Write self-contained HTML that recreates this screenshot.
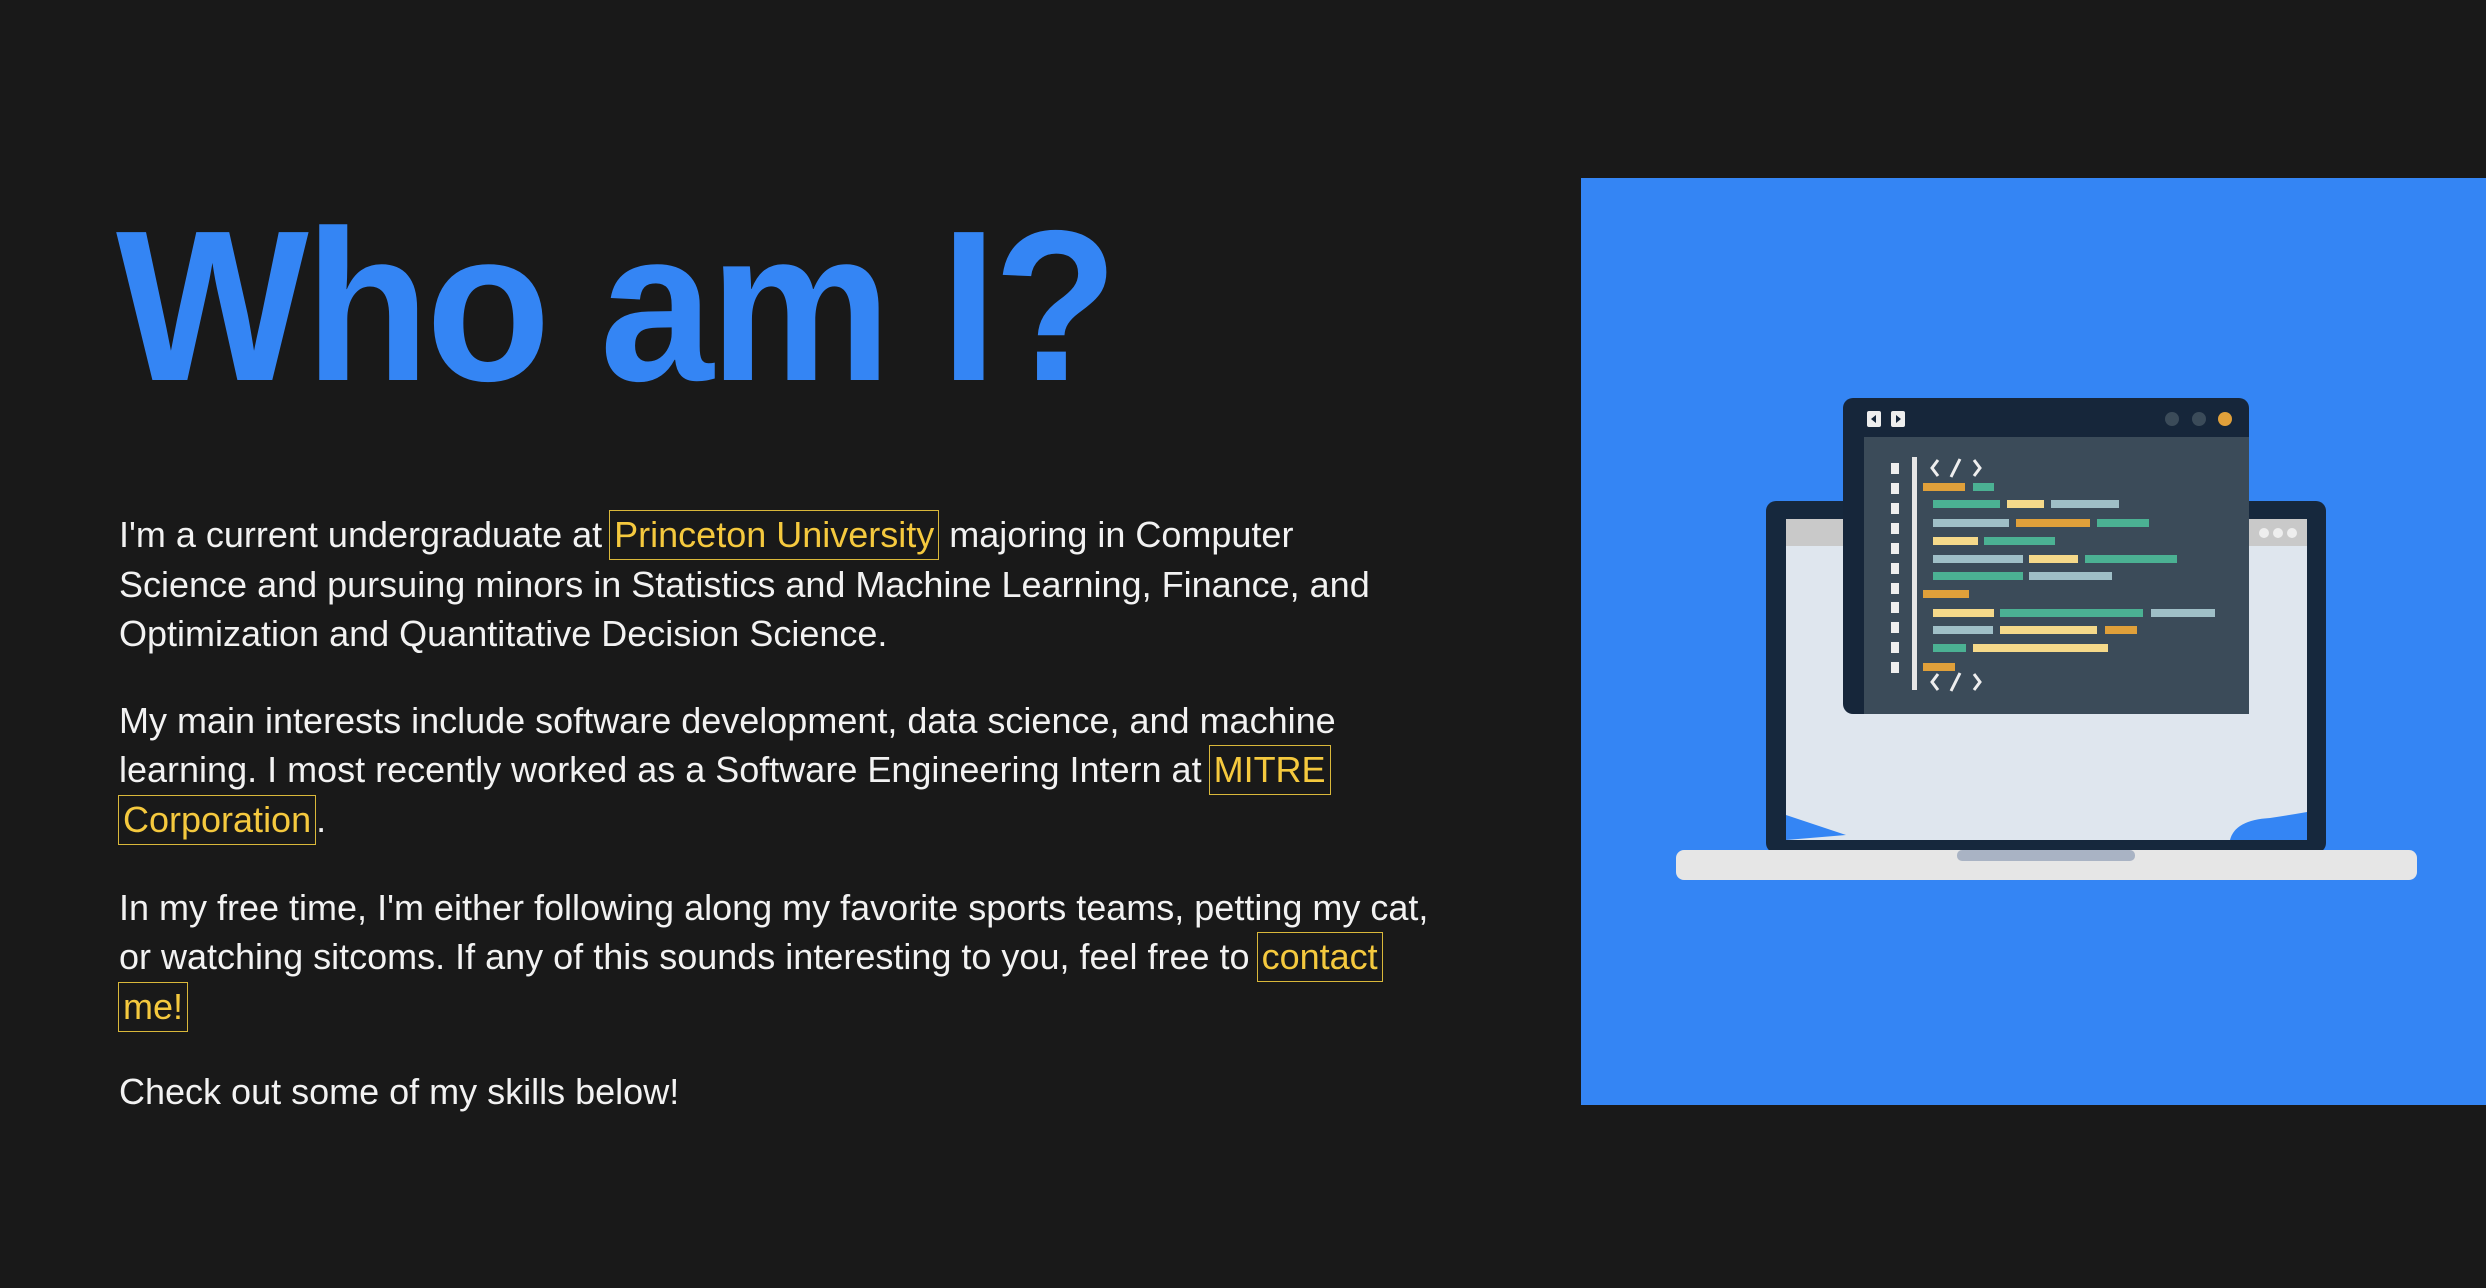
<!DOCTYPE html>
<html><head><meta charset="utf-8"><style>
html,body{margin:0;padding:0;background:#191919;width:2486px;height:1288px;overflow:hidden;}
body{position:relative;font-family:"Liberation Sans",Arial,sans-serif;}
h1{position:absolute;left:116px;top:198px;margin:0;font-size:215px;line-height:215px;font-weight:bold;color:#3485f4;letter-spacing:-4px;white-space:nowrap;transform:scaleX(0.95);transform-origin:0 0;}
.p{position:absolute;left:119px;margin:0;font-size:36px;line-height:49px;color:#f2f2f2;white-space:nowrap;font-weight:300;}
.l{display:inline-block;border:1px solid #d9b83a;color:#f5c93e;padding:0 4px;line-height:48px;vertical-align:top;margin-left:-3px;}
.l0{margin-left:0;}
#img{position:absolute;left:1581px;top:178px;width:905px;height:927px;background:#3485f4;}
</style></head><body>
<h1>Who am I?</h1>
<p class="p" style="top:510px">I'm a current undergraduate at <span class="l">Princeton University</span> majoring in Computer<br>Science and pursuing minors in Statistics and Machine Learning, Finance, and<br>Optimization and Quantitative Decision Science.</p>
<p class="p" style="top:696px">My main interests include software development, data science, and machine<br>learning. I most recently worked as a Software Engineering Intern at <span class="l">MITRE</span><br><span class="l l0" style="margin-left:-1px">Corporation</span>.</p>
<p class="p" style="top:883px">In my free time, I'm either following along my favorite sports teams, petting my cat,<br>or watching sitcoms. If any of this sounds interesting to you, feel free to <span class="l">contact</span><br><span class="l l0" style="margin-left:-1px">me!</span></p>
<p class="p" style="top:1067px">Check out some of my skills below!</p>
<svg id="img" viewBox="1581 178 905 927" xmlns="http://www.w3.org/2000/svg">
<rect x="1581" y="178" width="905" height="927" fill="#3485f4"/>
<rect x="1766" y="501" width="560" height="352" rx="10" fill="#16283d"/>
<rect x="1786" y="519" width="521" height="321" fill="#dfe6ee"/>
<rect x="1786" y="519" width="521" height="27" fill="#c9c9c9"/>
<circle cx="2264" cy="533" r="5" fill="#eee"/><circle cx="2278" cy="533" r="5" fill="#eee"/><circle cx="2292" cy="533" r="5" fill="#eee"/>
<path d="M1786 815 q30 10 60 20 l-60 5z" fill="#3485f4"/>
<path d="M2230 840 q5 -20 40 -22 q20 -3 37 -6 v28z" fill="#3485f4"/>
<rect x="1676" y="850" width="741" height="30" rx="8" fill="#e6e6e6"/>
<rect x="1957" y="850" width="178" height="11" rx="5" fill="#a9b3c4"/>
<rect x="1843" y="398" width="406" height="316" rx="10" fill="#16263a"/>
<rect x="1864" y="437" width="385" height="277" fill="#3b4b59"/>
<rect x="1867" y="411" width="14" height="16" rx="2" fill="#eee"/><rect x="1891" y="411" width="14" height="16" rx="2" fill="#eee"/>
<path d="M1876 415 l-5 4 5 4z M1896 415 l5 4 -5 4z" fill="#16263a"/>
<circle cx="2172" cy="419" r="7" fill="#3b4b59"/><circle cx="2199" cy="419" r="7" fill="#3b4b59"/><circle cx="2225" cy="419" r="7" fill="#e0a03a"/>
<rect x="1912" y="457" width="5" height="233" fill="#e6e6e6"/>
<g fill="#eee">
<rect x="1891" y="463" width="8" height="11"/><rect x="1891" y="483" width="8" height="11"/><rect x="1891" y="503" width="8" height="11"/><rect x="1891" y="523" width="8" height="11"/><rect x="1891" y="543" width="8" height="11"/><rect x="1891" y="563" width="8" height="11"/><rect x="1891" y="583" width="8" height="11"/><rect x="1891" y="602" width="8" height="11"/><rect x="1891" y="622" width="8" height="11"/><rect x="1891" y="642" width="8" height="11"/><rect x="1891" y="662" width="8" height="11"/>
</g>
<g fill="none" stroke="#eee" stroke-width="3">
<path d="M1938 460 l-6 8 6 8 M1960 459 l-9 18 M1974 460 l6 8 -6 8"/>
<path d="M1938 674 l-6 8 6 8 M1960 673 l-9 18 M1974 674 l6 8 -6 8"/>
</g>
<g>
<rect x="1923" y="483" width="42" height="8" fill="#e0a03a"/><rect x="1973" y="483" width="21" height="8" fill="#4bb193"/>
<rect x="1933" y="500" width="67" height="8" fill="#4bb193"/><rect x="2007" y="500" width="37" height="8" fill="#f5d98a"/><rect x="2051" y="500" width="68" height="8" fill="#9fbfc7"/>
<rect x="1933" y="519" width="76" height="8" fill="#9fbfc7"/><rect x="2016" y="519" width="74" height="8" fill="#e0a03a"/><rect x="2097" y="519" width="52" height="8" fill="#4bb193"/>
<rect x="1933" y="537" width="45" height="8" fill="#f5d98a"/><rect x="1984" y="537" width="71" height="8" fill="#4bb193"/>
<rect x="1933" y="555" width="90" height="8" fill="#9fbfc7"/><rect x="2029" y="555" width="49" height="8" fill="#f5d98a"/><rect x="2085" y="555" width="92" height="8" fill="#4bb193"/>
<rect x="1933" y="572" width="90" height="8" fill="#4bb193"/><rect x="2029" y="572" width="83" height="8" fill="#9fbfc7"/>
<rect x="1923" y="590" width="46" height="8" fill="#e0a03a"/>
<rect x="1933" y="609" width="61" height="8" fill="#f5d98a"/><rect x="2000" y="609" width="143" height="8" fill="#4bb193"/><rect x="2151" y="609" width="64" height="8" fill="#9fbfc7"/>
<rect x="1933" y="626" width="60" height="8" fill="#9fbfc7"/><rect x="2000" y="626" width="97" height="8" fill="#f5d98a"/><rect x="2105" y="626" width="32" height="8" fill="#e0a03a"/>
<rect x="1933" y="644" width="33" height="8" fill="#4bb193"/><rect x="1973" y="644" width="135" height="8" fill="#f5d98a"/>
<rect x="1923" y="663" width="32" height="8" fill="#e0a03a"/>
</g>
</svg>
</body></html>
